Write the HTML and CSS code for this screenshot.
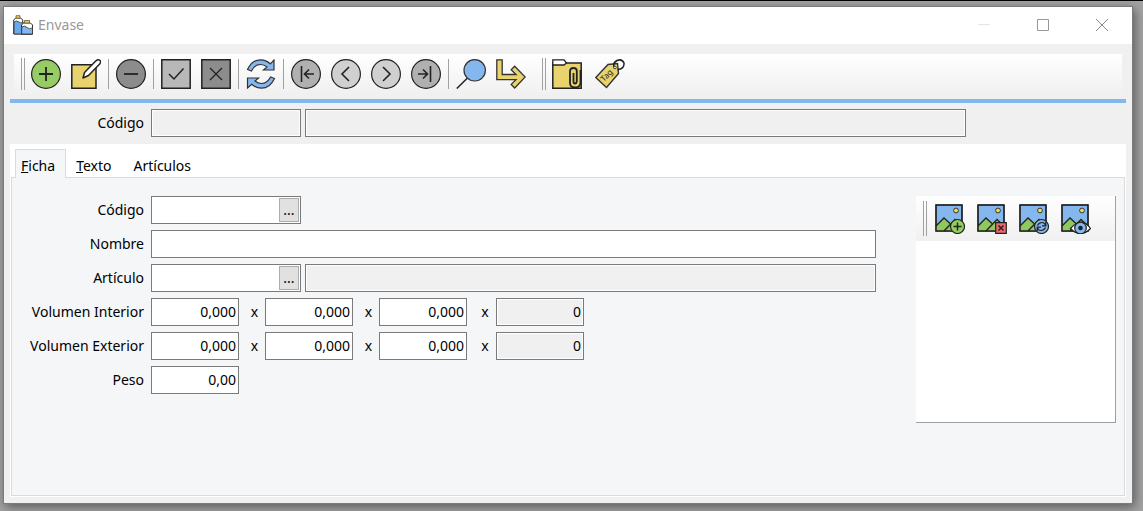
FILE: index.html
```html
<!DOCTYPE html>
<html lang="es">
<head>
<meta charset="utf-8">
<title>Envase</title>
<link rel="stylesheet" href="styles.css">
</head>
<body>
<svg class="defs" aria-hidden="true">
  <symbol id="landscape" viewBox="0 0 30 30">
    <rect x="1" y="1" width="26" height="26" fill="#84b7ee" stroke="#222"/>
    <path d="M1 22 9 14 14 19 20 15 27 21V27H1Z" fill="#8fc85c"/>
    <path d="M1 22 9 14 15 19.500M9 27 20 15.500 27 22" fill="none" stroke="#222" stroke-width="1.3"/>
    <rect x="1" y="1" width="26" height="26" fill="none" stroke="#222" stroke-width="1.5"/>
    <circle cx="21" cy="6.500" r="2.400" fill="#f3d85b" stroke="#333"/>
  </symbol>
</svg>
<main class="window">
  <header class="titlebar">
    <svg class="app-icon" viewBox="0 0 20 20">
      <path d="M.7 19V5l2-2h5l2 2v14Z" fill="#fff" stroke="#333"/>
      <path d="M1 7q3-2 5 0t4 0v12H1Z" fill="#69a9ea" stroke="#333" stroke-width=".8"/>
      <path d="M8.500 19.300V10l2-2h7l2 2v9.300Z" fill="#fff" stroke="#333"/>
      <path d="M8.700 12q3-2 5.300 .5t5.500 .3V19H8.700Z" fill="#84b7ee" stroke="#333" stroke-width=".8"/>
      <path d="M3 .7h4v2.500H3ZM11.500 5.500h5V8h-5Z" fill="#f0cf50" stroke="#665a30" stroke-width=".8"/>
    </svg>
    <h1 class="title">Envase</h1>
    <button class="caption" aria-label="Minimizar" disabled><svg viewBox="0 0 12 12"><path d="M0 5.500H12" stroke="#e5e5e5"/></svg></button>
    <button class="caption" aria-label="Maximizar"><svg viewBox="0 0 12 12"><path d="M.5.5h11v11H.5Z" fill="none" stroke="#999"/></svg></button>
    <button class="caption" aria-label="Cerrar"><svg viewBox="0 0 12 12"><path d="M0 0 12 12M12 0 0 12" stroke="#888"/></svg></button>
  </header>

  <div class="toolbar" role="toolbar" aria-label="Principal">
    <span class="grip"></span>
    <button class="tool" aria-label="Nuevo"><svg viewBox="0 0 30 30"><circle cx="15" cy="15" r="14.400" fill="#97cc64" stroke="#222" stroke-width="1.2"/><path d="M8 15H22M15 8V22" stroke="#222" stroke-width="1.8"/></svg></button>
    <button class="tool" aria-label="Editar"><svg viewBox="0 0 30 30"><path d="M.8 5.800H25V29.200H.8Z" fill="#e8d36f" stroke="#222" stroke-width="1.5"/><path d="M12 19 13.500 13.500 25 1.800Q27 .2 28.800 1.300T28.700 5L17.500 16.500Z" fill="#fff" stroke="#222" stroke-width="1.5" stroke-linejoin="round"/></svg></button>
    <span class="separator"></span>
    <button class="tool" aria-label="Eliminar"><svg viewBox="0 0 30 30"><circle cx="15" cy="15" r="14.400" fill="#8c8c8c" stroke="#222" stroke-width="1.2"/><path d="M8 15H22" stroke="#222" stroke-width="1.8"/></svg></button>
    <span class="separator"></span>
    <button class="tool" aria-label="Aceptar"><svg viewBox="0 0 30 30"><path d="M.8.8H29.200V29.200H.8Z" fill="#b8b8b8" stroke="#222" stroke-width="1.5"/><path d="M8 15 13 20 22.500 9.500" fill="none" stroke="#222" stroke-width="1.5"/></svg></button>
    <button class="tool" aria-label="Cancelar"><svg viewBox="0 0 30 30"><path d="M.8.8H29.200V29.200H.8Z" fill="#8c8c8c" stroke="#222" stroke-width="1.5"/><path d="M9 9 21 21M21 9 9 21" stroke="#222" stroke-width="1.3"/></svg></button>
    <span class="separator"></span>
    <button class="tool" aria-label="Refrescar"><svg viewBox="0 0 30 30"><g fill="#84b7ee" stroke="#333" stroke-width="1.2"><path d="M1.500 10.500Q6 .8 14.500.8 20 .8 24.300 4.800L28 1V11H17.500L21 8Q18 5.500 14.500 5.500 8.500 5.500 5.500 12Z"/><path d="M28.500 19.500Q24 29.200 15.500 29.200 10 29.200 5.700 25.200L1.500 29V19H12.500L9 22Q12 24.500 15.500 24.500 21.500 24.500 24.500 18Z"/></g></svg></button>
    <span class="separator"></span>
    <button class="tool" aria-label="Primero"><svg viewBox="0 0 30 30"><circle cx="15" cy="15" r="14.400" fill="#b0b0b0" stroke="#222" stroke-width="1.2"/><path d="M10.500 7V23M23 15H13.500M18 10.500 13.500 15 18 19.500" fill="none" stroke="#222" stroke-width="1.6"/></svg></button>
    <button class="tool" aria-label="Anterior"><svg viewBox="0 0 30 30"><circle cx="15" cy="15" r="14.400" fill="#d0d0d0" stroke="#222" stroke-width="1.2"/><path d="M18 8 11 15 18 22" fill="none" stroke="#222" stroke-width="1.6"/></svg></button>
    <button class="tool" aria-label="Siguiente"><svg viewBox="0 0 30 30"><circle cx="15" cy="15" r="14.400" fill="#d0d0d0" stroke="#222" stroke-width="1.2"/><path d="M12 8 19 15 12 22" fill="none" stroke="#222" stroke-width="1.6"/></svg></button>
    <button class="tool" aria-label="Último"><svg viewBox="0 0 30 30"><circle cx="15" cy="15" r="14.400" fill="#b0b0b0" stroke="#222" stroke-width="1.2"/><path d="M19.500 7V23M7 15H16.500M12 10.500 16.500 15 12 19.500" fill="none" stroke="#222" stroke-width="1.6"/></svg></button>
    <span class="separator"></span>
    <button class="tool" aria-label="Buscar"><svg viewBox="0 0 30 30"><path d="M.8 29.500 12 18.500" stroke="#222" stroke-width="1.5"/><circle cx="18.700" cy="11.300" r="10.700" fill="#84b7ee" stroke="#333" stroke-width="1.2"/></svg></button>
    <button class="tool" aria-label="Ir a"><svg viewBox="0 0 30 30"><path d="M.8.8H6.200V15.500H20L15.200 10.800 18.700 7.200 29.200 18 18.700 29 15.200 25.400 20 20.600H.8Z" fill="#e8d36f" stroke="#333" stroke-width="1.3"/></svg></button>
    <span class="grip grip-next"></span>
    <button class="tool" aria-label="Adjuntos"><svg viewBox="0 0 30 30"><path d="M.8 4H29.200V29.200H.8Z" fill="#e8d36f" stroke="#222" stroke-width="1.5"/><path d="M.8 6V.8H12L14.500 4 12 6Z" fill="#fff" stroke="#222" stroke-width="1.3"/><path d="M21.500 14V22.500Q21.500 24.500 23 24.500T24.800 22.500V12Q24.800 9 21.500 9T18 12V24Q18 28.500 23 28.500T28.500 24V11" fill="none" stroke="#222" stroke-width="1.8"/></svg></button>
    <button class="tool tool-tag" aria-label="Etiquetas"><svg viewBox="0 0 30 30"><path d="M.8 18.500 13 5.500 22.500 4.500 23.500 14.500 11.500 28.500Z" fill="#e8d36f" stroke="#333" stroke-width="1.4"/><path d="M19.500 9.500Q17 4 22 1.500 27-.5 29 4 29.500 10 22.500 10.500" fill="none" stroke="#222" stroke-width="1.5"/><circle cx="20" cy="8.500" r="1.300" fill="#fff" stroke="#222" stroke-width=".8"/><text class="tag-text" transform="translate(9 23) rotate(-46)">Tag</text></svg></button>
  </div>

  <div class="summary">
    <label for="cod-resumen">Código</label>
    <input id="cod-resumen" class="code" readonly>
    <input class="wide" aria-label="Descripción" readonly>
  </div>

  <section class="notebook">
    <div class="tabs" role="tablist">
      <button class="tab tab-active" role="tab" aria-selected="true"><u>F</u>icha</button>
      <button class="tab" role="tab" aria-selected="false"><u>T</u>exto</button>
      <button class="tab" role="tab" aria-selected="false">Artículos</button>
    </div>
    <div class="pane" role="tabpanel">
      <form class="form">
        <div class="row">
          <label for="codigo">Código</label>
          <span class="lookup"><input id="codigo"><button type="button" aria-label="Buscar código">...</button></span>
        </div>
        <div class="row">
          <label for="nombre">Nombre</label>
          <input id="nombre" class="wide">
        </div>
        <div class="row">
          <label for="articulo">Artículo</label>
          <span class="lookup"><input id="articulo"><button type="button" aria-label="Buscar artículo">...</button></span>
          <input class="wide" aria-label="Nombre del artículo" readonly>
        </div>
        <div class="row">
          <label for="interior">Volumen Interior</label>
          <input id="interior" class="number" value="0,000"><span class="times">x</span>
          <input class="number" aria-label="Interior, ancho" value="0,000"><span class="times">x</span>
          <input class="number" aria-label="Interior, alto" value="0,000"><span class="times times-total">x</span>
          <input class="number" aria-label="Interior, total" value="0" readonly>
        </div>
        <div class="row">
          <label for="exterior">Volumen Exterior</label>
          <input id="exterior" class="number" value="0,000"><span class="times">x</span>
          <input class="number" aria-label="Exterior, ancho" value="0,000"><span class="times">x</span>
          <input class="number" aria-label="Exterior, alto" value="0,000"><span class="times times-total">x</span>
          <input class="number" aria-label="Exterior, total" value="0" readonly>
        </div>
        <div class="row">
          <label for="peso">Peso</label>
          <input id="peso" class="number" value="0,00">
        </div>
      </form>
      <aside class="picture">
        <div class="picture-tools" role="toolbar" aria-label="Imagen">
          <span class="grip"></span>
          <button class="tool" aria-label="Añadir imagen"><svg viewBox="0 0 30 30"><use href="#landscape"/><circle cx="22.500" cy="22.500" r="7" fill="#8fd05c" stroke="#222" stroke-width="1.2"/><path d="M18.500 22.500H26.500M22.500 18.500V26.500" stroke="#222" stroke-width="1.5"/></svg></button>
          <button class="tool" aria-label="Quitar imagen"><svg viewBox="0 0 30 30"><use href="#landscape"/><path d="M18.700 18.700H29.300V29.300H18.700Z" fill="#f0686b" stroke="#222" stroke-width="1.2"/><path d="M21.500 21.500 26.500 26.500M26.500 21.500 21.500 26.500" stroke="#222" stroke-width="1.5"/></svg></button>
          <button class="tool" aria-label="Recargar imagen"><svg viewBox="0 0 30 30"><use href="#landscape"/><circle cx="22.500" cy="22.500" r="7" fill="#84b7ee" stroke="#222" stroke-width="1.2"/><path d="M18.500 21.500Q20 18.500 23 18.500T26.500 21.500M26.800 18V21.800H23M26.500 23.500Q25 26.500 22 26.500T18.500 23.500M18.200 27V23.200H22" fill="none" stroke="#222" stroke-width="1.2"/></svg></button>
          <button class="tool" aria-label="Ver imagen"><svg viewBox="0 0 30 30"><use href="#landscape"/><path d="M9.500 24.500Q14 19 19.500 18.500T29.500 24.500Q25 29.500 19.500 29.500T9.500 24.500Z" fill="#fff" stroke="#222" stroke-width="1.2"/><circle cx="19.500" cy="24" r="5.800" fill="#84b7ee" stroke="#222" stroke-width="1.2"/><circle cx="19.500" cy="24" r="2.300" fill="#222"/></svg></button>
        </div>
      </aside>
    </div>
  </section>
</main>
</body>
</html>
```
FILE: styles.css
```css
* { box-sizing: border-box; }

body {
  margin: 0;
  min-height: 100vh;
  display: flex;
  padding: 5px 10px 7px 3px;
  border-top: 1px solid #000;
  background: #a3a3a3;
  color: #000;
  font: 14px/20px "Noto Sans", sans-serif;
}

button, input { font: inherit; color: inherit; }
button { border: 0; padding: 0; background: none; }

.defs { display: none; }

.window {
  flex: 1;
  min-width: 0;
  display: flex;
  flex-direction: column;
  border: 1px solid #7b7b7b;
  background: #f0f0f0;
  box-shadow: 2px 3px 10px rgba(0, 0, 0, 0.45);
}

.titlebar {
  display: flex;
  align-items: center;
  height: 37px;
  padding: 0 1px 1px 9px;
  background: #fff;
}
.app-icon { width: 20px; height: 20px; }
.title { flex: 1; margin: 0 0 0 5px; color: #999; font-size: 14px; font-weight: 400; }
.caption { width: 59px; height: 36px; }
.caption svg { display: block; width: 12px; height: 12px; margin: 0 auto; }

.toolbar {
  display: flex;
  align-items: center;
  margin: 10px 10px 4px;
  height: 41px;
  padding: 0 0 1px 6px;
  background: linear-gradient(#fff, #f0f0f0);
}
.grip {
  width: 4px;
  height: 32px;
  margin: 0 1px;
  border: solid #a0a0a0;
  border-width: 0 1px;
}
.grip-next { margin-left: 11px; }
.separator { width: 1px; height: 30px; margin: 0 2px; background: #a0a0a0; }
.tool { width: 40px; height: 40px; }
.tool svg { display: block; width: 30px; height: 30px; margin: 0 auto; }
.toolbar .grip + .tool { margin-left: 0; }
.tool-tag { margin-left: 3px; }
.tag-text { font: 8px "Noto Sans", sans-serif; fill: #222; }

.summary {
  display: flex;
  gap: 4px;
  margin: 0 6px;
  padding: 6px 160px 7px 2px;
  border-top: 4px solid #84b7ee;
}

label {
  flex: none;
  width: 132px;
  margin-right: 3px;
  line-height: 28px;
  text-align: right;
}
input {
  min-width: 0;
  height: 28px;
  padding: 0 2px 2px;
  border: 1px solid #7a7a7a;
  border-radius: 0;
  background: #fff;
}
input:read-only { background: #f0f0f0; box-shadow: inset 0 0 0 1px #fff; }
.code { width: 150px; }
.wide { flex: 1; }

.notebook {
  flex: 1;
  display: flex;
  flex-direction: column;
  margin: 0 6px 6px;
  padding: 5px 1px 1px;
  background: #fff;
}
.tabs { display: flex; padding-left: 4px; }
.tab { height: 28px; padding: 6px 12px 0 10px; }
.tab-active {
  height: 29px;
  margin-bottom: -1px;
  padding: 4px 10px 0 5px;
  border: 1px solid #d9dcde;
  border-bottom: 0;
  background: #f4f6f8;
  z-index: 1;
}
.pane {
  flex: 1;
  display: flex;
  align-items: flex-start;
  gap: 40px;
  padding: 18px 8px 18px 0;
  border: 1px solid #d9dcde;
  background: #f4f6f8;
}

.form { flex: 1; display: grid; gap: 6px; }
.row { display: flex; gap: 4px; }
.lookup {
  display: flex;
  width: 150px;
  height: 28px;
  padding: 1px;
  border: 1px solid #7a7a7a;
  background: #fff;
}
.lookup input { flex: 1; height: 24px; border: 0; }
.lookup button { width: 20px; border: 1px solid #adadad; background: #e1e1e1; }
.number { width: 88px; text-align: right; }
.times { width: 18px; padding-left: 5px; line-height: 28px; text-align: center; }
.times-total { width: 21px; padding-left: 7px; }

.picture {
  width: 200px;
  height: 227px;
  border: solid #a0a0a0;
  border-width: 0 1px 1px 0;
  background: #fff;
}
.picture-tools {
  display: flex;
  align-items: center;
  gap: 2px;
  height: 45px;
  padding-left: 6px;
  background: linear-gradient(#fff, #f0f0f0);
}
.picture-tools .grip { height: 35px; }
```
